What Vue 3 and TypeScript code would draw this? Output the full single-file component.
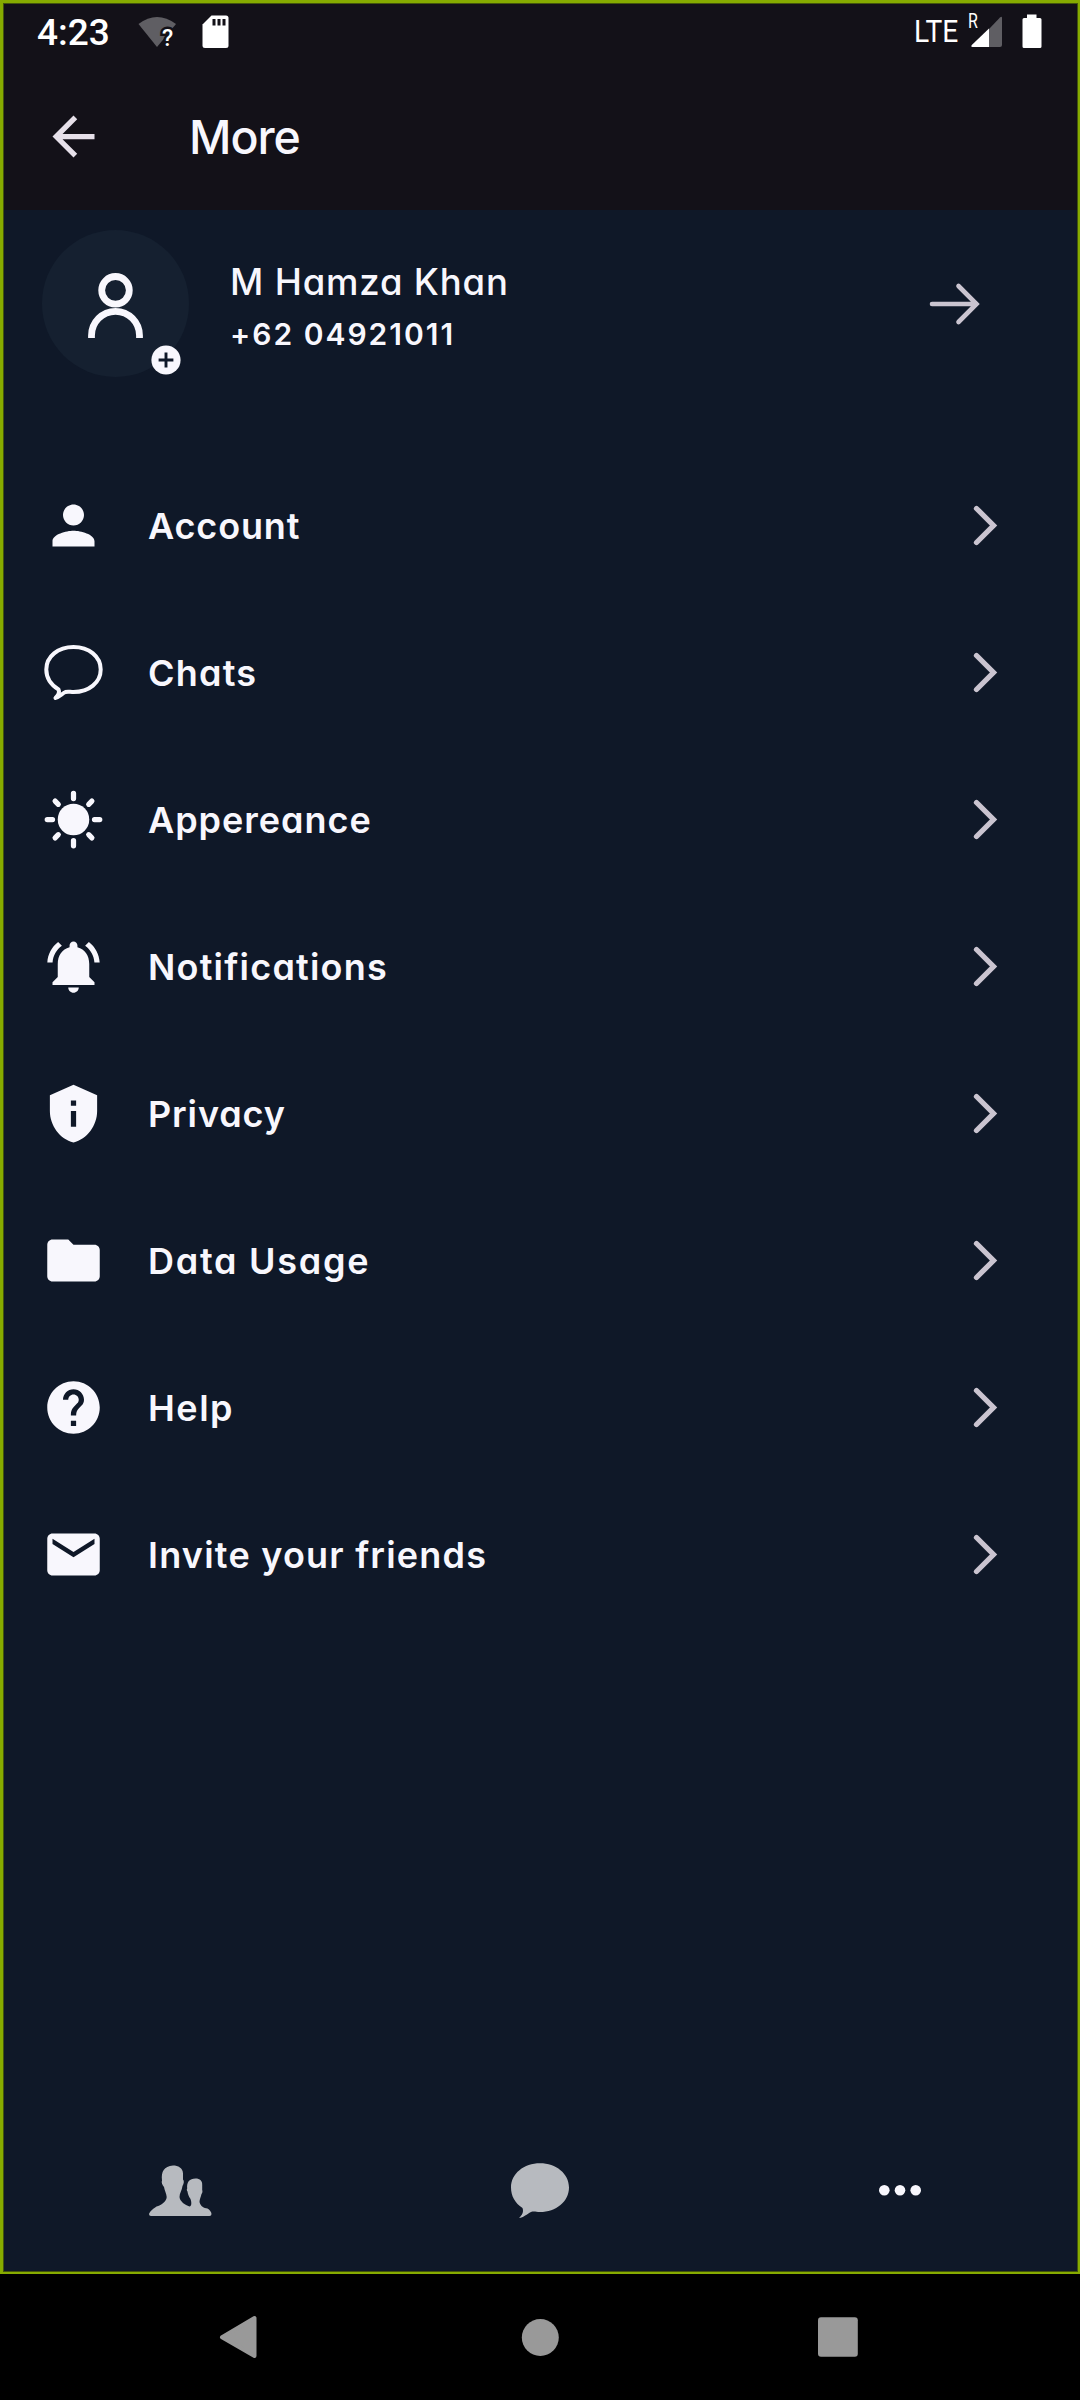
<script setup lang="ts">
interface MenuItem {
  id: string
  label: string
  spacing: number
}

const items: MenuItem[] = [
  { id: 'account', label: 'Account', spacing: 0.85 },
  { id: 'chats', label: 'Chats', spacing: 1.2 },
  { id: 'appearance', label: 'Appereance', spacing: 0.98 },
  { id: 'notifications', label: 'Notifications', spacing: 1.2 },
  { id: 'privacy', label: 'Privacy', spacing: 0.88 },
  { id: 'data', label: 'Data Usage', spacing: 1.75 },
  { id: 'help', label: 'Help', spacing: 1.5 },
  { id: 'invite', label: 'Invite your friends', spacing: 1.22 },
]

const paths: Record<string, string> = {
  account: 'M12 12c2.21 0 4-1.79 4-4s-1.79-4-4-4-4 1.79-4 4 1.79 4 4 4zm0 2c-2.67 0-8 1.34-8 4v2h16v-2c0-2.66-5.33-4-8-4z',
  notifications:
    'M7.58 4.08L6.15 2.65C3.75 4.48 2.17 7.3 2.03 10.5h2c.15-2.65 1.51-4.97 3.55-6.42zm12.39 6.42h2c-.15-3.2-1.73-6.02-4.12-7.85l-1.42 1.43c2.02 1.45 3.39 3.77 3.54 6.42zM18 11c0-3.07-1.64-5.64-4.5-6.32V4c0-.83-.67-1.5-1.5-1.5s-1.5.67-1.5 1.5v.68C7.63 5.36 6 7.92 6 11v5l-2 2v1h16v-1l-2-2v-5zM12 22c1.1 0 2-.9 2-2h-4c0 1.1.9 2 2 2z',
  privacy: 'M12 1L3 5v6c0 5.55 3.84 10.74 9 12 5.16-1.26 9-6.45 9-12V5l-9-4zm-1 6h2v2h-2V7zm0 4h2v6h-2v-6z',
  data: 'M10 4H4c-1.1 0-1.99.9-1.99 2L2 18c0 1.1.9 2 2 2h16c1.1 0 2-.9 2-2V8c0-1.1-.9-2-2-2h-8l-2-2z',
  help: 'M12 2C6.48 2 2 6.48 2 12s4.48 10 10 10 10-4.48 10-10S17.52 2 12 2zm1 17h-2v-2h2v2zm2.07-7.75l-.9.92C13.45 12.9 13 13.5 13 15h-2v-.5c0-1.1.45-2.1 1.17-2.83l1.24-1.26c.37-.36.59-.86.59-1.41 0-1.1-.9-2-2-2s-2 .9-2 2H8c0-2.21 1.79-4 4-4s4 1.79 4 4c0 .88-.36 1.68-.93 2.25z',
  invite: 'M20 4H4c-1.1 0-1.99.9-1.99 2L2 18c0 1.1.9 2 2 2h16c1.1 0 2-.9 2-2V6c0-1.1-.9-2-2-2zm0 4l-8 5-8-5V6l8 5 8-5v2z',
}
</script>

<template>
  <div class="phone-screen">
    <div class="app">
      <header class="top">
        <div class="status">
          <span class="clock">4:23</span>
          <svg class="wifi" width="40" height="34" viewBox="0 0 40 34">
            <path d="M0.5 9 Q19 -5 38 9 L19 32z" fill="#5f5e63" />
            <text x="24" y="30.500" class="wifi-q halo">?</text>
            <text x="24" y="30.500" class="wifi-q">?</text>
          </svg>
          <svg class="sd" width="27" height="34" viewBox="0 0 27 34">
            <path d="M9.500 .5H24a2.500 2.500 0 0 1 2.500 2.500V30.500a2.500 2.500 0 0 1-2.500 2.500H3A2.500 2.500 0 0 1 .5 30.500V9.500z" fill="#fff" />
            <path d="M10.500 4h3v6.500h-3zM15.500 4h3v6.500h-3zM20.500 4h3v6.500h-3z" fill="#131118" />
          </svg>
          <span class="lte">LTE</span>
          <span class="roam">R</span>
          <svg class="signal" width="32" height="32" viewBox="0 0 32 32">
            <path d="M31 2v27a2 2 0 0 1-2 2H18V13L29 1.500q2-1.500 2 .5z" fill="#5f5e63" />
            <path d="M18 12.500V31H1.500Q-.5 31 .8 29z" fill="#fff" />
          </svg>
          <svg class="battery" width="20" height="35" viewBox="0 0 20 35">
            <path d="M5 0.500h9.500V4H18a1.500 1.500 0 0 1 1.500 1.500V32.500A1.500 1.500 0 0 1 18 34H2A1.500 1.500 0 0 1 .5 32.500V5.500A1.500 1.500 0 0 1 2 4h3z" fill="#fff" />
          </svg>
        </div>
        <div class="bar">
          <svg width="63" height="63" viewBox="0 0 24 24">
            <path d="M20 11H7.830l5.590-5.590L12 4l-8 8 8 8 1.410-1.410L7.830 13H20v-2z" fill="#e6e0e9" />
          </svg>
          <h1 class="title">More</h1>
        </div>
      </header>

      <section class="profile">
        <div class="avatar">
          <svg width="56" height="68" viewBox="0 0 56 68">
            <g fill="none" stroke="#f8f7fd" stroke-width="6.800">
              <circle cx="27.500" cy="20.300" r="13.800" />
              <path d="M3.500 68V65.500a24 24.200 0 0 1 48 0V68" />
            </g>
          </svg>
          <svg class="badge" width="30" height="30" viewBox="0 0 30 30">
            <circle cx="15" cy="15" r="14.600" fill="#f8f7fd" />
            <path d="M15 7.600v14.800M7.600 15h14.800" stroke="#0f1828" stroke-width="2.900" />
          </svg>
        </div>
        <div class="who">
          <span class="name">M Hamza Khan</span>
          <span class="phone">+62 04921011</span>
        </div>
        <svg class="go" width="54" height="44" viewBox="0 0 54 44">
          <path d="M4 22H48M30.500 4L48.500 22L30.500 40" fill="none" stroke="#cac4d0" stroke-width="4.600" stroke-linecap="round" />
        </svg>
      </section>

      <nav class="menu">
        <div v-for="item in items" :key="item.id" class="row">
          <svg v-if="item.id === 'chats'" width="63" height="63" viewBox="0 0 63 63">
            <path d="M31.500 6C47 6 58.700 15.500 58.700 28.500S47 51 31.500 51C28 51 26 50.300 23.500 51C20.500 52.300 17.500 55.500 13.500 57C16.500 54 18 51.500 16.500 48.500C8.500 43.500 4.300 37 4.300 28.500C4.300 15.500 16 6 31.500 6z" fill="none" stroke="#f8f7fd" stroke-width="4" stroke-linejoin="round" />
          </svg>
          <svg v-else-if="item.id === 'appearance'" width="63" height="63" viewBox="0 0 24 24">
            <circle cx="12" cy="12" r="6" fill="#f8f7fd" />
            <path d="M12 2v2M12 20v2M2 12h2M20 12h2M5 5l1.200 1.200M17.800 17.800L19 19M19 5l-1.200 1.200M5 19l1.200-1.200" stroke="#f8f7fd" stroke-width="2" stroke-linecap="round" />
          </svg>
          <svg v-else width="63" height="63" viewBox="0 0 24 24">
            <path :d="paths[item.id]" fill="#f8f7fd" />
          </svg>
          <span class="label" :style="{ letterSpacing: item.spacing + 'px' }">{{ item.label }}</span>
          <svg class="chevron" width="30" height="46" viewBox="0 0 30 46">
            <path d="M6.500 5.500L23.500 22.500L6.500 39.500" fill="none" stroke="#cac4d0" stroke-width="5.300" stroke-linecap="round" />
          </svg>
        </div>
      </nav>

      <nav class="tabs">
        <div class="tab">
          <svg width="64" height="56" viewBox="0 -2 64 56" fill="#b7babf">
            <path d="M25 1.500C30 1.500 35 4 35 9.500V15.500C36.500 17 35.800 20 34.500 22C34 26 31.500 29.500 31.500 33C32 37.500 37 41 41.500 42.500C44 42 43.500 38 42.500 35C40.500 32 39.800 30 39.500 27.500C38.800 26.500 38.500 25.500 39.200 24.500C38.500 18 41.500 14.500 47.500 14.500C52 14.500 54.500 17 54.200 21V26C54.800 27.500 54.300 29 53.500 30C53 33 51.500 35 51.500 38C52.500 42.500 56 44 59.500 44.500C61.500 45.500 63.500 48 63.500 50Q63.500 52 61.500 52H3Q1 52 1 50C2 47 6 44 8.500 42.500C13 41.500 18.500 37.500 18.700 33C18.500 29.500 16.500 26.500 16 23C14.500 21 13 18.500 14 16.500C13 7.500 16 2.500 25 1.500z" />
          </svg>
        </div>
        <div class="tab">
          <svg width="60" height="58" viewBox="0 0 60 58" fill="#b7babf">
            <path d="M30 2.200C46 2.200 59 12.500 59 26.500S46 51 30 51C26 51 24 50 21 51C17 53 13.500 56.500 9 57C12 54 14 51.500 12.500 47C5 42 1 35 1 26.500C1 12.500 14 2.200 30 2.200z" />
          </svg>
        </div>
        <div class="tab">
          <svg width="44" height="12" viewBox="0 0 44 12" fill="#f8f7fd">
            <circle cx="6.300" cy="6.300" r="5.300" /><circle cx="22" cy="6.300" r="5.300" /><circle cx="37.700" cy="6.300" r="5.300" />
          </svg>
        </div>
      </nav>
    </div>

    <div class="sysnav">
      <svg width="44" height="44" viewBox="0 0 44 44"><path d="M4 22.300L36.500 3V41z" fill="#999" stroke="#999" stroke-width="4" stroke-linejoin="round" /></svg>
      <svg width="44" height="44" viewBox="0 0 44 44"><circle cx="22.300" cy="22.500" r="18.500" fill="#999" /></svg>
      <svg width="44" height="44" viewBox="0 0 44 44"><rect x="0" y="2.200" width="39.800" height="39.600" rx="3" fill="#999" /></svg>
    </div>
  </div>
</template>

<style>
body {
  margin: 0;
  background: #000;
}
</style>

<style scoped>
.phone-screen {
  width: 1080px;
  height: 2400px;
  display: flex;
  flex-direction: column;
  background: #000;
  color: #f8f7fd;
  font-family: Inter, 'Open Sans', sans-serif;
  font-feature-settings: 'cv11' 1;
}
svg {
  display: block;
  flex: none;
}
.app {
  position: relative;
  height: 2274px;
  display: flex;
  flex-direction: column;
  background: #0f1828;
}
.app::after {
  content: '';
  position: absolute;
  inset: 0;
  border: 3px solid #86ab00;
  border-right-width: 2px;
  border-bottom-width: 2px;
  box-shadow: inset 0 0 0 1px #43550c;
}
.top {
  height: 210px;
  background: #131118;
}
.status {
  height: 63px;
  display: flex;
  align-items: flex-start;
  color: #fff;
  font-family: Roboto, sans-serif;
}
.clock {
  width: 78px;
  margin: 11px 0 0 37px;
  font-size: 37px;
  font-weight: 500;
  line-height: 43px;
}
.wifi {
  margin: 15px 0 0 23px;
  overflow: visible;
}
.wifi-q {
  font: 500 23px Roboto, sans-serif;
  fill: #fff;
}
.halo {
  fill: #131118;
  stroke: #131118;
  stroke-width: 5px;
}
.sd {
  margin: 15px 0 0 24px;
}
.lte {
  margin: 13px 0 0 685px;
  width: 53px;
  font-size: 32px;
  line-height: 37px;
  transform: scaleX(0.88);
  transform-origin: left;
}
.roam {
  margin: 9px 0 0 1px;
  width: 3px;
  font-size: 20px;
  line-height: 24px;
  transform: scaleX(0.8);
  transform-origin: left;
}
.signal {
  margin-top: 16px;
}
.battery {
  margin: 14px 0 0 19px;
}
.bar {
  height: 147px;
  display: flex;
  align-items: center;
  padding-left: 42px;
}
.title {
  margin: 1px 0 0 84px;
  font-size: 46.500px;
  font-weight: 500;
  letter-spacing: -1px;
  line-height: 60px;
}
.profile {
  height: 242px;
  display: flex;
  align-items: flex-start;
}
.avatar {
  position: relative;
  width: 147px;
  height: 147px;
  margin: 20px 0 0 42px;
  border-radius: 50%;
  background: #152030;
  display: flex;
  justify-content: center;
  align-items: center;
}
.badge {
  position: absolute;
  left: 109px;
  top: 115px;
}
.who {
  display: flex;
  flex-direction: column;
  margin: 48px 0 0 41px;
  width: 698px;
}
.name {
  font-size: 36.500px;
  line-height: 48px;
  font-weight: 500;
  letter-spacing: 0.82px;
  align-self: flex-start;
}
.phone {
  font-size: 30px;
  font-weight: 600;
  line-height: 40px;
  letter-spacing: 2px;
  margin-top: 8px;
  align-self: flex-start;
}
.go {
  margin-top: 72px;
}
.row {
  height: 147px;
  display: flex;
  align-items: center;
  padding-left: 42px;
}
.label {
  margin: 1px 0 0 43px;
  font-size: 36px;
  font-weight: 600;
  line-height: 48px;
  white-space: nowrap;
}
.chevron {
  margin: 0 80px 0 auto;
}
.tabs {
  margin-top: auto;
  height: 168px;
  display: grid;
  grid-template-columns: repeat(3, 1fr);
}
.tab {
  display: flex;
  align-items: center;
  justify-content: center;
}
.sysnav {
  flex: 1;
  display: flex;
  justify-content: center;
  align-items: center;
  gap: 256px;
}
</style>
